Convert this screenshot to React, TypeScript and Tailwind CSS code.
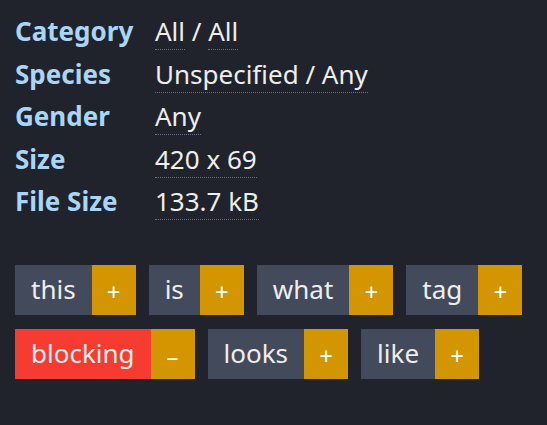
import React from "react";

const info = [
  { label: "Category", values: ["All", "All"] },
  { label: "Species", values: ["Unspecified / Any"] },
  { label: "Gender", values: ["Any"] },
  { label: "Size", values: ["420 x 69"] },
  { label: "File Size", values: ["133.7 kB"] },
];

const tags = [
  { name: "this" },
  { name: "is" },
  { name: "what" },
  { name: "tag" },
  { name: "blocking", blocked: true },
  { name: "looks" },
  { name: "like" },
];

export default function App() {
  return (
    <div
      className="min-h-screen bg-[#20232b] px-[15px] pt-[10px] text-[26px] text-[#eeeeee]"
      style={{ fontFamily: '"Noto Sans", "Open Sans", sans-serif' }}
    >
      <div className="grid grid-cols-[140px_auto] leading-[42.5px]">
        {info.map((row) => (
          <React.Fragment key={row.label}>
            <div className="font-bold text-[#a9d5f7]">{row.label}</div>
            <div>
              {row.values.map((v, i) => (
                <React.Fragment key={i}>
                  {i > 0 && " / "}
                  <span className="border-b border-dotted border-[#6b7080]">{v}</span>
                </React.Fragment>
              ))}
            </div>
          </React.Fragment>
        ))}
      </div>

      <div className="mt-[42px] flex w-[520px] flex-wrap gap-x-[13px] gap-y-[14px]">
        {tags.map((t) => (
          <div key={t.name} className="flex h-[50px]">
            <span
              className={
                "flex items-center px-[16px] " + (t.blocked ? "bg-[#f63b31]" : "bg-[#434a5b]")
              }
            >
              {t.name}
            </span>
            <span className="flex w-[44px] items-center justify-center bg-[#d39500] pt-[4px] text-[24px] text-white">
              {t.blocked ? "–" : "+"}
            </span>
          </div>
        ))}
      </div>
    </div>
  );
}
